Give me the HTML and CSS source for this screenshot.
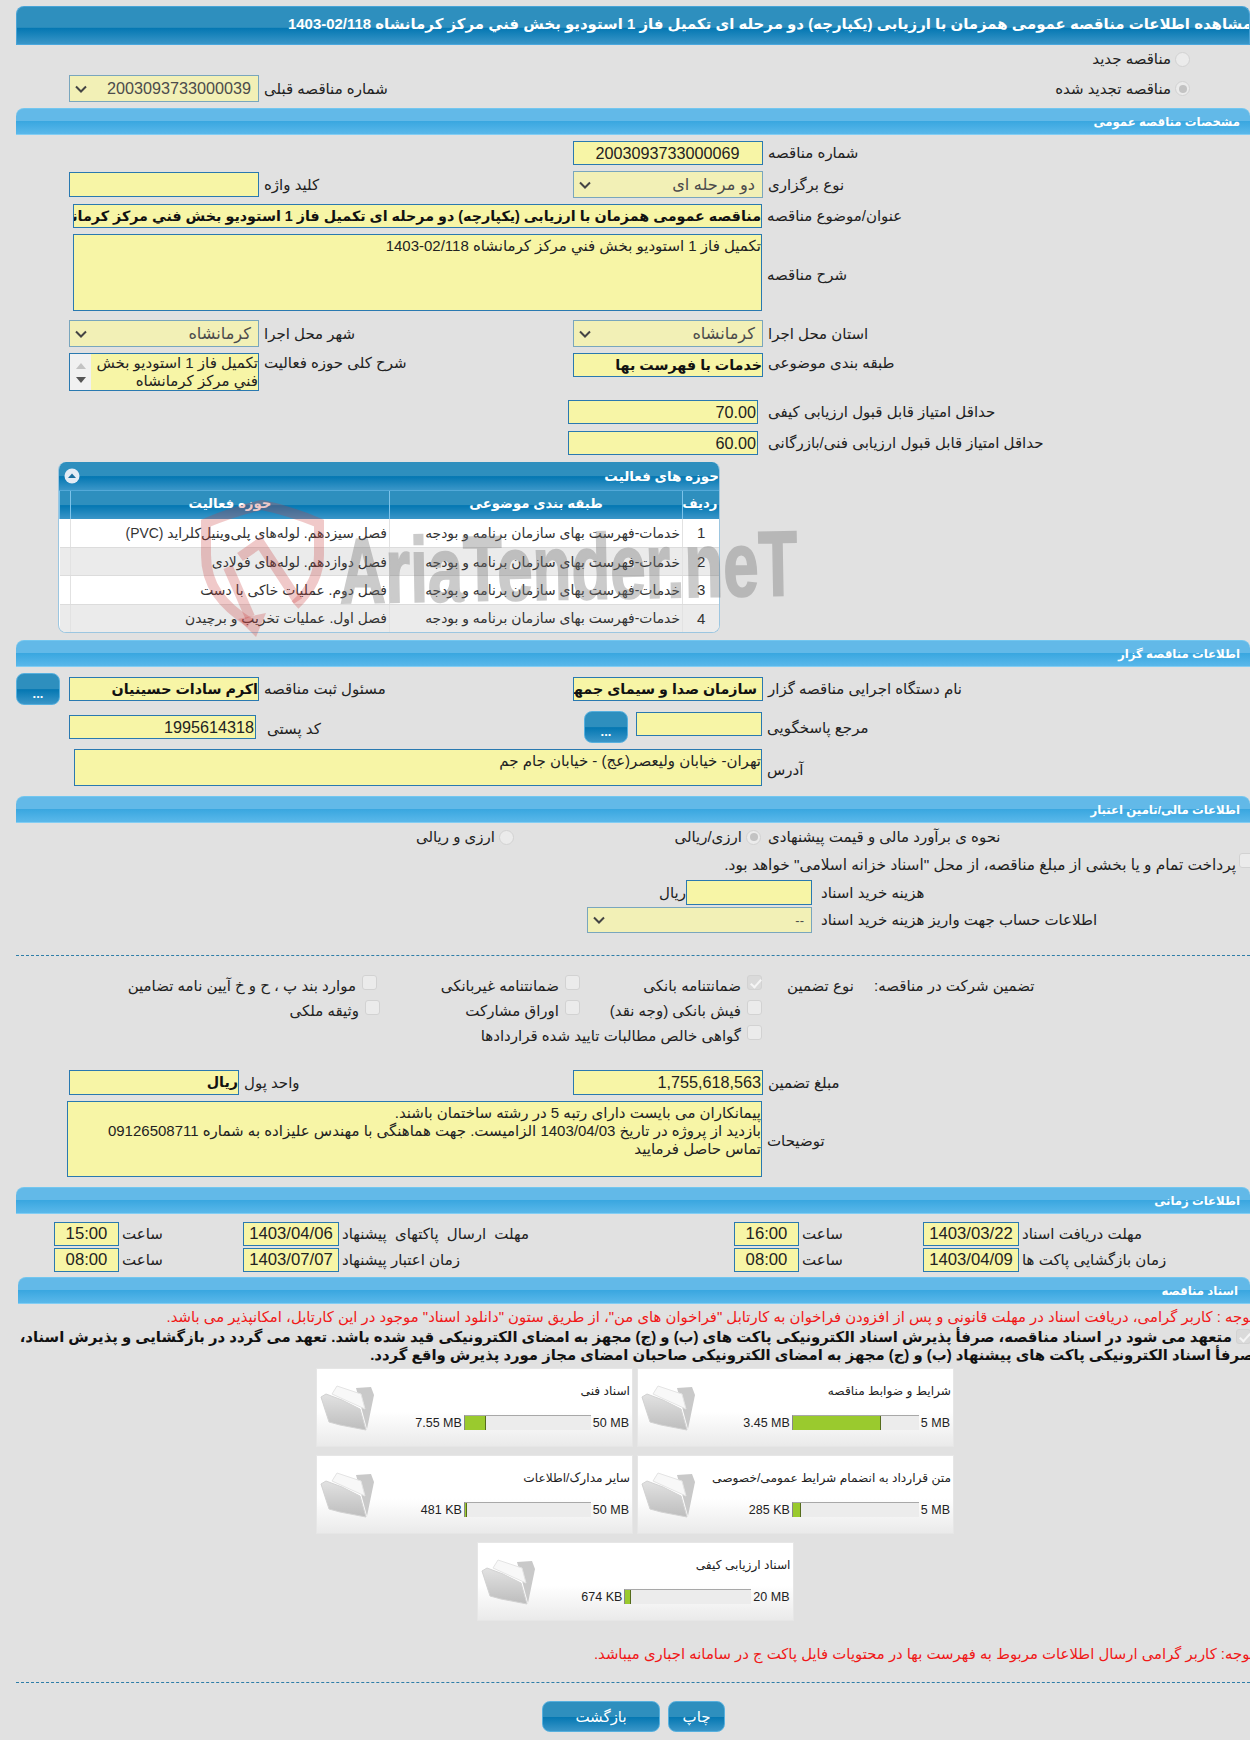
FILE: index.html
```html
<!DOCTYPE html>
<html lang="fa">
<head>
<meta charset="utf-8">
<title>مشاهده اطلاعات مناقصه</title>
<link rel="stylesheet" href="styles.css">
</head>
<body>
<div class="page">
  <h1 class="title"><span>مشاهده اطلاعات مناقصه عمومی همزمان با ارزیابی (یکپارچه) دو مرحله ای تکمیل فاز 1 استودیو بخش فني مرکز کرمانشاه 02/118-1403</span></h1>

  <div class="radio-row r-new"><label class="lbl">مناقصه جدید</label><input type="radio" disabled></div>
  <div class="prev-row">
    <div class="field"><div class="sel w190"><svg class="chev" viewBox="0 0 12 8"><path d="M1 1.5 6 6.5 11 1.5"/></svg><span>2003093733000039</span></div><label class="lbl">شماره مناقصه قبلی</label></div>
    <div class="radio-cell"><label class="lbl">مناقصه تجدید شده</label><input type="radio" disabled checked></div>
  </div>

  <h2 class="sec s1"><span>مشخصات مناقصه عمومی</span></h2>
  <div class="two mt6 h24"><div></div><div class="field"><div class="inp w190 num ctr">2003093733000069</div><label class="lbl">شماره مناقصه</label></div></div>
  <div class="two mt6 h27">
    <div class="field"><div class="inp w190 h25"></div><label class="lbl">کلید واژه</label></div>
    <div class="field"><div class="sel w190"><svg class="chev" viewBox="0 0 12 8"><path d="M1 1.5 6 6.5 11 1.5"/></svg><span>دو مرحله ای</span></div><label class="lbl">نوع برگزاری</label></div>
  </div>
  <div class="wide mt6 pl73"><div class="inp grow b h24 clip">مناقصه عمومی همزمان با ارزیابی (یکپارچه) دو مرحله ای تکمیل فاز 1 استودیو بخش فني مرکز کرمانشاه 02/118-1403</div><label class="lbl">عنوان/موضوع مناقصه</label></div>
  <div class="wide mt6 pl73"><div class="inp grow area h77">تکمیل فاز 1 استودیو بخش فني مرکز کرمانشاه 02/118-1403</div><label class="lbl">شرح مناقصه</label></div>
  <div class="two mt9 h27">
    <div class="field"><div class="sel w190"><svg class="chev" viewBox="0 0 12 8"><path d="M1 1.5 6 6.5 11 1.5"/></svg><span>کرمانشاه</span></div><label class="lbl">شهر محل اجرا</label></div>
    <div class="field"><div class="sel w190"><svg class="chev" viewBox="0 0 12 8"><path d="M1 1.5 6 6.5 11 1.5"/></svg><span>کرمانشاه</span></div><label class="lbl">استان محل اجرا</label></div>
  </div>
  <div class="two mt6 top">
    <div class="field top"><div class="listbox"><div class="scroll"><i class="up"></i><i class="down"></i></div><div class="lb-text">تکمیل فاز 1 استودیو بخش فني مرکز کرمانشاه</div></div><label class="lbl">شرح کلی حوزه فعالیت</label></div>
    <div class="field top"><div class="inp w190 b h24 clip">خدمات با فهرست بها</div><label class="lbl">طبقه بندی موضوعی</label></div>
  </div>
  <div class="score mt9"><div class="inp w190 num h24">70.00</div><label class="lbl">حداقل امتیاز قابل قبول ارزیابی کیفی</label></div>
  <div class="score mt7"><div class="inp w190 num h24">60.00</div><label class="lbl">حداقل امتیاز قابل قبول ارزیابی فنی/بازرگانی</label></div>

  <section class="panel">
    <div class="panel-head"><svg class="toggle" viewBox="0 0 16 16"><circle cx="8" cy="8" r="7.5"/><path d="M4 10 8 5.5 12 10Z"/></svg><span>حوزه های فعالیت</span></div>
    <table class="grid">
      <thead><tr><th class="c-r">ردیف</th><th class="c-a">طبقه بندی موضوعی</th><th class="c-b">حوزه فعالیت</th><th class="c-e"></th></tr></thead>
      <tbody>
        <tr><td class="c-r">1</td><td class="c-a">خدمات-فهرست بهای سازمان برنامه و بودجه</td><td class="c-b">فصل سیزدهم. لوله‌های پلی‌وینیل‌کلراید (PVC)</td><td class="c-e"></td></tr>
        <tr><td class="c-r">2</td><td class="c-a">خدمات-فهرست بهای سازمان برنامه و بودجه</td><td class="c-b">فصل دوازدهم. لوله‌های فولادی</td><td class="c-e"></td></tr>
        <tr><td class="c-r">3</td><td class="c-a">خدمات-فهرست بهای سازمان برنامه و بودجه</td><td class="c-b">فصل دوم. عملیات خاکی با دست</td><td class="c-e"></td></tr>
        <tr><td class="c-r">4</td><td class="c-a">خدمات-فهرست بهای سازمان برنامه و بودجه</td><td class="c-b">فصل اول. عملیات تخریب و برچیدن</td><td class="c-e"></td></tr>
      </tbody>
    </table>
  </section>

  <h2 class="sec s2"><span>اطلاعات مناقصه گزار</span></h2>
  <div class="org mt6">
    <div class="field"><button class="more" type="button">...</button><div class="inp w190 b h24 clip">اکرم سادات حسینیان</div><label class="lbl">مسئول ثبت مناقصه</label></div>
    <div class="field"><div class="inp w190 b h24 clip ltrpad">سازمان صدا و سیمای جمهوری اسلامی ایران</div><label class="lbl">نام دستگاه اجرایی مناقصه گزار</label></div>
  </div>
  <div class="org mt6 r2">
    <div class="field"><div class="inp w187 num h24 postal">1995614318</div><label class="lbl gap6">کد پستی</label></div>
    <div class="field resp"><button class="more" type="button">...</button><div class="inp w126 h24"></div><label class="lbl">مرجع پاسخگویی</label></div>
  </div>
  <div class="wide mt7 pl74"><div class="inp grow area h37">تهران- خیابان ولیعصر(عج) - خیابان جام جم</div><label class="lbl">آدرس</label></div>

  <h2 class="sec s3"><span>اطلاعات مالی/تامین اعتبار</span></h2>
  <div class="est">
    <div class="radio-cell"><label class="lbl">ارزی و ریالی</label><input type="radio" disabled></div>
    <div class="radio-cell"><label class="lbl">ارزی/ریالی</label><input type="radio" disabled checked></div>
    <label class="lbl">نحوه ی برآورد مالی و قیمت پیشنهادی</label>
  </div>
  <div class="pay"><label class="lbl">پرداخت تمام و یا بخشی از مبلغ مناقصه، از محل "اسناد خزانه اسلامی" خواهد بود.</label><input type="checkbox" disabled></div>
  <div class="cost"><span class="unit">ریال</span><div class="inp h25"></div><label class="lbl">هزینه خرید اسناد</label></div>
  <div class="acct"><div class="sel"><svg class="chev" viewBox="0 0 12 8"><path d="M1 1.5 6 6.5 11 1.5"/></svg><span class="dash">--</span></div><label class="lbl">اطلاعات حساب جهت واریز هزینه خرید اسناد</label></div>

  <hr class="dashed d1">

  <div class="guar">
    <div class="chk n3"><label class="lbl">موارد بند پ ، ح و خ آیین نامه تضامین</label><input type="checkbox" disabled></div>
    <div class="chk"><label class="lbl">ضمانتنامه غیربانکی</label><input type="checkbox" disabled></div>
    <div class="chk"><label class="lbl">ضمانتنامه بانکی</label><input type="checkbox" disabled checked></div>
    <label class="lbl g-type">نوع تضمین</label>
    <label class="lbl">تضمین شرکت در مناقصه:</label>

    <div class="chk"><label class="lbl">وثیقه ملکی</label><input type="checkbox" disabled></div>
    <div class="chk"><label class="lbl">اوراق مشارکت</label><input type="checkbox" disabled></div>
    <div class="chk"><label class="lbl">فیش بانکی (وجه نقد)</label><input type="checkbox" disabled></div>
    <div class="g-span"></div>

    <div></div>
    <div class="chk g-wide"><label class="lbl">گواهی خالص مطالبات تایید شده قراردادها</label><input type="checkbox" disabled></div>
  </div>

  <div class="two amount">
    <div class="field"><div class="inp w170 b h25 clip">ریال</div><label class="lbl">واحد پول</label></div>
    <div class="field"><div class="inp w190 num h25">1,755,618,563</div><label class="lbl">مبلغ تضمین</label></div>
  </div>
  <div class="wide mt6 pl67"><div class="inp grow area h76">پیمانکاران می بایست دارای رتبه 5 در رشته ساختمان باشند.<br>بازدید از پروژه در تاریخ 1403/04/03 الزامیست. جهت هماهنگی با مهندس علیزاده به شماره 09126508711<br>تماس حاصل فرمایید</div><label class="lbl">توضیحات</label></div>

  <h2 class="sec s4"><span>اطلاعات زمانی</span></h2>
  <div class="times">
    <div class="inp t-v">15:00</div><label class="lbl">ساعت</label><div class="inp t-v">1403/04/06</div><label class="lbl t-long">مهلت ارسال پاکتهای پیشنهاد</label>
    <div class="inp t-v">16:00</div><label class="lbl">ساعت</label><div class="inp t-v">1403/03/22</div><label class="lbl">مهلت دریافت اسناد</label>
    <div class="inp t-v">08:00</div><label class="lbl">ساعت</label><div class="inp t-v">1403/07/07</div><label class="lbl">زمان اعتبار پیشنهاد</label>
    <div class="inp t-v">08:00</div><label class="lbl">ساعت</label><div class="inp t-v">1403/04/09</div><label class="lbl">زمان بازگشایی پاکت ها</label>
  </div>

  <h2 class="sec s5"><span>اسناد مناقصه</span></h2>
  <p class="red r1">توجه : کاربر گرامی، دریافت اسناد در مهلت قانونی و پس از افزودن فراخوان به کارتابل "فراخوان های من"، از طریق ستون "دانلود اسناد" موجود در این کارتابل، امکانپذیر می باشد.</p>
  <p class="pledge"><input type="checkbox" disabled checked> متعهد می شود در اسناد مناقصه، صرفأ پذیرش اسناد الکترونیکی پاکت های (ب) و (ج) مجهز به امضای الکترونیکی قید شده باشد. تعهد می گردد در بازگشایی و پذیرش اسناد،<br>صرفأ اسناد الکترونیکی پاکت های پیشنهاد (ب) و (ج) مجهز به امضای الکترونیکی صاحبان امضای مجاز مورد پذیرش واقع گردد.</p>

  <div class="cards">
    <article class="card">
      <svg class="folder" viewBox="0 0 60 64"><use href="#folder-art"/></svg>
      <div class="c-body"><div class="c-title">اسناد فنی</div><div class="c-prog"><span>7.55 MB</span><div class="bar"><i class="fill f21"></i></div><span>50 MB</span></div></div>
    </article>
    <article class="card">
      <svg class="folder" viewBox="0 0 60 64"><use href="#folder-art"/></svg>
      <div class="c-body"><div class="c-title">شرایط و ضوابط مناقصه</div><div class="c-prog"><span>3.45 MB</span><div class="bar"><i class="fill f88"></i></div><span>5 MB</span></div></div>
    </article>
    <article class="card">
      <svg class="folder" viewBox="0 0 60 64"><use href="#folder-art"/></svg>
      <div class="c-body"><div class="c-title">سایر مدارک/اطلاعات</div><div class="c-prog"><span>481 KB</span><div class="bar"><i class="fill f2"></i></div><span>50 MB</span></div></div>
    </article>
    <article class="card">
      <svg class="folder" viewBox="0 0 60 64"><use href="#folder-art"/></svg>
      <div class="c-body"><div class="c-title">متن قرارداد به انضمام شرایط عمومی/خصوصی</div><div class="c-prog"><span>285 KB</span><div class="bar"><i class="fill f8"></i></div><span>5 MB</span></div></div>
    </article>
    <article class="card">
      <svg class="folder" viewBox="0 0 60 64"><use href="#folder-art"/></svg>
      <div class="c-body"><div class="c-title">اسناد ارزیابی کیفی</div><div class="c-prog"><span>674 KB</span><div class="bar"><i class="fill f6"></i></div><span>20 MB</span></div></div>
    </article>
  </div>

  <p class="red r2b">توجه: کاربر گرامی ارسال اطلاعات مربوط به فهرست بها در محتویات فایل پاکت ج در سامانه اجباری میباشد.</p>
  <hr class="dashed d2">
  <div class="actions"><button class="act back" type="button">بازگشت</button><button class="act print" type="button">چاپ</button></div>

  <svg class="defs" width="0" height="0"><defs>
    <linearGradient id="fgr" x1="0" y1="0" x2="0" y2="1"><stop offset="0" stop-color="#e2e2e2"/><stop offset="1" stop-color="#bdbdbd"/></linearGradient>
    <g id="folder-art">
      <path d="M39 21 54 20 57 28 50 62Z" fill="#c9c9c9"/>
      <path d="M15 27 20 19 44 27 48 42Z" fill="#f8f8f8" stroke="#e4e4e4"/>
      <path d="M4 30 9 27 25 33 43 42 49 63 23 58 12 55Z" fill="url(#fgr)" stroke="#d2d2d2"/>
    </g>
  </defs></svg>

  <svg class="watermark" viewBox="0 0 610 150" aria-hidden="true">
    <path class="wm-s" d="M50 128C22 110 6 90 6 60L6 28C25 20 42 14 62 10C82 14 100 20 119 28L119 60C119 82 108 98 95 110"/>
    <path class="wm-s" d="M28 72 50 122"/>
    <path class="wm-s" d="M40 62 60 48 98 106"/>
    <path class="wm-h" d="M38 124 66 118 56 142Z"/>
    <text class="wm-t" x="140" y="108" textLength="458" lengthAdjust="spacingAndGlyphs">AriaTender.neT</text>
  </svg>
</div>
</body>
</html>
```
FILE: styles.css
```css
* { box-sizing: border-box; }
html, body { margin: 0; padding: 0; }
body {
  background: #e1e1e1;
  font-family: "Liberation Sans", "DejaVu Sans", sans-serif;
  font-size: 15px;
  color: #222;
}
.page { position: relative; width: 1250px; height: 1740px; overflow: hidden; }

.title {
  margin: 6px 0 0 16px; height: 39px; padding: 0 0 3px; overflow: hidden;
  direction: rtl; white-space: nowrap; font-size: 14.95px; font-weight: bold; color: #fff; line-height: 34px;
  border: 1px solid #49a3d6; border-bottom-color: #4aa7dd; border-radius: 8px 8px 0 0;
  background: linear-gradient(#2e8fbe 0, #2e8fbe 55%, #0477b2 57%, #3a96c8 100%);
}
.title span { margin-right: -3px; }

.sec {
  margin: 0 0 0 16px; height: 27px; padding-right: 10px; direction: rtl;
  font-size: 11.7px; font-weight: bold; color: #fff; line-height: 26px;
  border-top: 1px solid #72c6ef; border-bottom: 1px solid #82cdf3; border-radius: 8px 8px 0 0;
  background: linear-gradient(#62b9e8 0, #62b9e8 48%, #3aa7e0 50%, #5ab8ea 100%);
}
.s2 { margin-top: 7px; }
.s3 { margin-top: 10px; }
.s4 { margin-top: 10px; }
.s5 { margin-top: 5px; margin-left: 18px; padding-right: 12px; }

.lbl { direction: rtl; text-align: left; white-space: nowrap; }
.inp {
  background: #f7f5a6; border: 1px solid #2a79b0; direction: rtl; height: 24px; line-height: 22px;
  color: #222; padding: 0; font-size: 14.3px; white-space: nowrap; overflow: hidden;
}
.num { font-size: 16.2px; color: #222; padding-right: 1px; }
.ctr { text-align: center; }
.b { font-weight: bold; color: #111; }
.clip { text-overflow: clip; }
.ltrpad { padding-right: 5px; }
.area { white-space: normal; line-height: 18px; padding: 2px 0; font-size: 15px; }
.area + .lbl { margin-top: 4px; }
.sel {
  display: flex; justify-content: space-between; align-items: center; height: 27px;
  background: #f2f0b6; border: 1px solid #79a6bd; padding: 0 7px 0 5px; color: #4c4c4c; font-size: 16.2px;
  direction: ltr; white-space: nowrap;
}
.sel span { direction: rtl; }
.dash { font-size: 13px; }
.chev { width: 12px; height: 8px; fill: none; stroke: #444; stroke-width: 2; }

.w190 { width: 190px; flex: none; }
.w187 { width: 187px; flex: none; }
.w170 { width: 170px; flex: none; }
.w126 { width: 126px; flex: none; }
.grow { flex: 0 0 auto; }
.h24 { height: 24px; }
.h25 { height: 25px; }
.h27 { height: 27px; }
.h37 { height: 37px; }
.h76 { height: 76px; }
.h77 { height: 77px; }
.mt6 { margin-top: 6px; }
.mt7 { margin-top: 7px; }
.mt9 { margin-top: 9px; }

.field { display: flex; gap: 5px; align-items: center; }
.field.top { align-items: flex-start; }
.field.top .lbl { line-height: 20px; }
.two { display: grid; grid-template-columns: 504px 1fr; padding-left: 69px; align-items: center; }
.two.top { align-items: start; }
.wide { display: flex; gap: 5px; align-items: center; }
.pl73 { padding-left: 73px; }
.pl74 { padding-left: 74px; }
.pl67 { padding-left: 67px; }
.pl73 .grow { width: 689px; }
.pl74 .grow { width: 688px; }
.pl67 .grow { width: 695px; }

.radio-row { height: 28px; display: flex; justify-content: flex-end; align-items: center; gap: 4px; padding-right: 60px; }
.prev-row { display: grid; grid-template-columns: 1fr auto; padding: 2px 60px 0 69px; height: 35px; align-items: start; }
.radio-cell { display: flex; justify-content: flex-end; align-items: center; gap: 4px; height: 27px; }

input[type=radio], input[type=checkbox] {
  appearance: none; -webkit-appearance: none; margin: 0; flex: none; position: relative;
  width: 15px; height: 15px; background: #ebebeb; border: 1px solid #d2d2d2;
}
input[type=radio] { border-radius: 50%; }
input[type=checkbox] { border-radius: 3px; }
input[type=radio]:checked::after {
  content: ""; position: absolute; left: 2.5px; top: 2.5px; width: 8px; height: 8px; border-radius: 50%; background: #c3c3c3;
}
input[type=checkbox]:checked { background: #dadada; }
input[type=checkbox]:checked::after {
  content: ""; position: absolute; left: 4.5px; top: 1px; width: 4px; height: 9px;
  border: solid #f5f5f5; border-width: 0 2px 2px 0; transform: rotate(42deg);
}

.listbox { width: 190px; height: 38px; flex: none; display: flex; background: #f7f5a6; border: 1px solid #2a79b0; overflow: hidden; }
.scroll { width: 21px; flex: none; background: #f1f1f1; position: relative; }
.up, .down { position: absolute; left: 6px; width: 0; height: 0; border: 5px solid transparent; border-top: 0; }
.up { top: 9px; border-bottom: 6px solid #c3c3c3; }
.down { bottom: 7px; border-top: 6px solid #555; border-bottom: 0; }
.lb-text { flex: 1; direction: rtl; line-height: 18px; font-size: 15px; padding: 0; }

.score { display: flex; padding-left: 568px; gap: 10px; align-items: center; }

.panel { margin: 7px 0 0 58px; width: 662px; height: 171px; border: 1px solid #9cc6e0; border-top: 0; border-radius: 8px; overflow: hidden; background: #fff; }
.panel-head {
  height: 29px; display: flex; justify-content: space-between; align-items: center; padding: 0 0 0 5px;
  direction: ltr; font-size: 13.5px; font-weight: bold; color: #fff;
  border-bottom: 1px solid #53a9d8;
  background: linear-gradient(#2e8fbe 0, #2e8fbe 50%, #0477b2 52%, #3a96c8 100%);
}
.panel-head span { direction: rtl; }
.toggle { width: 16px; height: 16px; }
.toggle circle { fill: #e4ecf5; }
.toggle path { fill: #1c6f9e; }
.grid { width: 660px; border-collapse: collapse; table-layout: fixed; direction: rtl; }
.grid th {
  height: 28px; font-size: 13.3px; font-weight: bold; color: #fff; padding: 0 2px 4px;
  border-left: 1px solid #7cc3ea;
  background: linear-gradient(#2e8fbe 0, #2e8fbe 50%, #0477b2 52%, #3a96c8 100%);
}
.grid td { height: 28.4px; padding: 0 2px; font-size: 13.9px; color: #333; border-left: 1px solid #e2e2e2; border-bottom: 1px solid #dcdcdc; white-space: nowrap; }
.grid tbody tr:nth-child(even) td { background: #ebebeb; }
.grid td.c-r { text-align: center; font-size: 15px; }
.c-r { width: 37px; }
.c-a { width: 293px; }
.c-b { width: 319px; }
.c-e { width: 11px; }
.grid td.c-e { border-left: 0; background: #fff; }

.org { display: grid; grid-template-columns: 557px 1fr; padding-left: 16px; align-items: center; height: 32px; }
.org .more { margin-right: 4px; }
.more {
  width: 44px; height: 32px; flex: none; border: 1px solid #57b0de; border-radius: 8px; color: #fff; font: bold 13px "Liberation Sans", sans-serif; padding: 8px 0 0;
  background: linear-gradient(#2e8fbe 0, #2e8fbe 50%, #0477b2 52%, #3a96c8 100%);
}
.r2 { height: 31px; align-items: start; }
.r2 .postal { margin: 4px 0 0 53px; }
.r2 .gap6 { margin: 6px 0 0 6px; line-height: 24px; }
.r2 .field { align-items: flex-start; }
.r2 .resp .more { margin: 0 3px 0 11px; }
.r2 .resp .inp { margin-top: 1px; }
.r2 .resp .lbl { margin-top: 5px; line-height: 24px; }

.est { display: grid; grid-template-columns: 514px 247px 1fr; height: 28px; align-items: center; gap: 0; }
.est > .lbl { padding-left: 7px; }
.pay { display: flex; justify-content: flex-end; align-items: center; height: 28px; gap: 3px; margin-right: -4px; font-size: 15.4px; }
.pay input { margin-top: -10px; }
.cost { display: grid; grid-template-columns: 686px 126px 1fr; height: 25px; margin-top: 1px; align-items: center; }
.cost > .lbl { padding-left: 9px; }
.unit { direction: rtl; text-align: right; }
.acct { display: grid; grid-template-columns: 587px 225px 1fr; height: 26px; margin-top: 2px; align-items: center; }
.acct .sel { grid-column: 2; height: 26px; }
.acct > .lbl { padding-left: 9px; }

.dashed { margin: 0 0 0 16px; border: 0; border-top: 1px dashed #2f7ea8; height: 0; }
.d1 { margin-top: 22px; }
.d2 { margin-top: 18px; }

.guar { display: grid; grid-template-columns: 380px 200px 182px 112px 1fr; grid-auto-rows: 25px; margin-top: 17px; align-items: center; }
.chk { display: flex; justify-content: flex-end; align-items: center; gap: 6px; }
.chk input { margin-top: -6px; }
.n3 { padding-right: 3px; }
.g-type { padding-left: 25px; }
.g-span { grid-column: span 2; }
.g-wide { grid-column: 2 / 4; }

.amount { margin-top: 22px; height: 25px; }

.times { display: grid; grid-template-columns: 65px 124px 96px 395px 65px 124px 96px 1fr; grid-auto-rows: 24px; row-gap: 2px; padding-left: 54px; margin-top: 8px; align-items: center; }
.times .lbl { padding-left: 3px; }
.t-long { word-spacing: 4px; }
.t-v { font-size: 16.7px; text-align: center; padding: 0; }

.red { margin: 0; direction: rtl; color: #f01818; white-space: nowrap; font-size: 14.88px; line-height: 20px; overflow: hidden; }
.red.r1 { margin-top: 3px; margin-right: -4px; height: 20px; }
.pledge { margin: 1px -4px 0 0; height: 36px; direction: rtl; white-space: nowrap; line-height: 18px; font-size: 14.85px; font-weight: bold; color: #111; }
.pledge input { vertical-align: -2px; margin-right: 3px; }

.cards { margin: 4px 0 0 316px; width: 638px; display: flex; flex-wrap: wrap; justify-content: center; gap: 8px 4px; }
.card {
  width: 317px; height: 79px; display: grid; grid-template-columns: 60px 1fr;
  background: linear-gradient(#fff 0, #fff 55%, #eaeaea 100%); border: 1px solid #e6e6e6;
  padding: 0 2px 0 0;
}
.folder { width: 60px; height: 64px; margin-top: -2px; }
.c-body { display: flex; flex-direction: column; justify-content: flex-start; align-items: flex-end; padding-top: 13px; }
.c-title { direction: rtl; font-size: 12.2px; line-height: 18px; color: #222; white-space: nowrap; }
.c-prog { display: flex; align-items: center; gap: 2px; margin-top: 15px; height: 15px; font-size: 12.5px; color: #222; padding-right: 1px; }
.c-prog span { white-space: nowrap; }
.bar { width: 127px; height: 15px; background: #ececec; border-top: 1px solid #a8a8a8; border-left: 1px solid #888; display: flex; }
.fill { display: block; height: 100%; background: #9aca2e; border-right: 1px solid #556b1c; }
.f88 { width: 88px; }
.f21 { width: 21px; }
.f2 { width: 2px; }
.f8 { width: 8px; }
.f6 { width: 6px; }

.red.r2b { margin-top: 23px; margin-right: -4px; height: 20px; }
.actions { display: flex; gap: 8px; margin: 18px 0 0 542px; }
.act {
  height: 31px; border: 1px solid #57b0de; border-radius: 8px; color: #fff; font: 15px "Liberation Sans", "DejaVu Sans", sans-serif;
  background: linear-gradient(#2e8fbe 0, #2e8fbe 50%, #0477b2 52%, #3a96c8 100%);
}
.back { width: 118px; }
.print { width: 57px; }

.defs { position: absolute; }
.watermark { position: absolute; left: 200px; top: 495px; width: 610px; height: 150px; pointer-events: none; }
.wm-s { fill: none; stroke: rgba(200, 60, 60, .28); stroke-width: 10; }
.wm-h { fill: rgba(200, 60, 60, .28); }
.wm-t { font: bold 92px "Liberation Sans", sans-serif; fill: #707070; stroke: #707070; stroke-width: 2; opacity: .36; transform: rotate(-1deg); transform-origin: 140px 108px; }
```
